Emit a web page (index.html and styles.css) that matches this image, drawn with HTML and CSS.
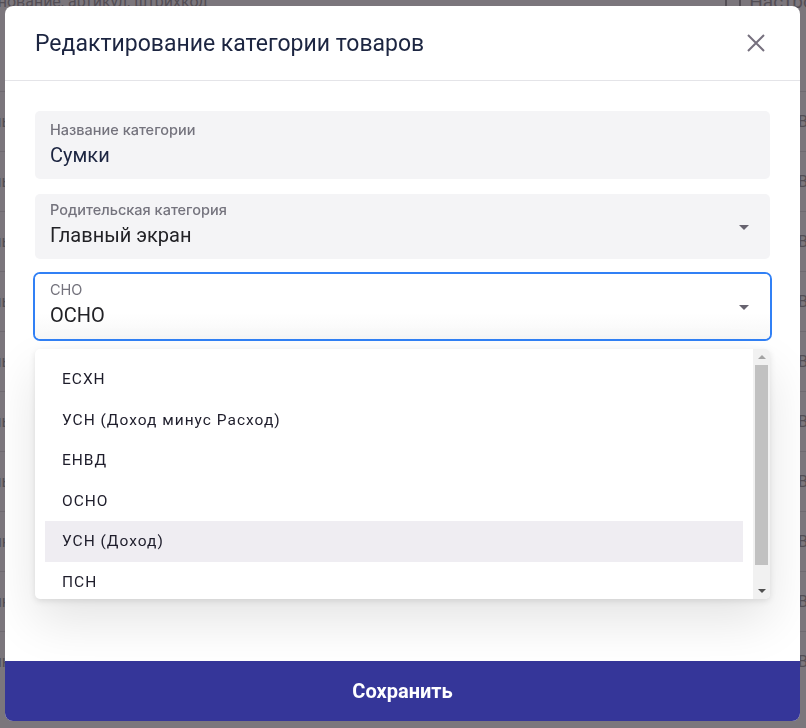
FILE: index.html
```html
<!DOCTYPE html>
<html lang="ru">
<head>
    <meta charset="UTF-8">
    <meta name="viewport" content="width=device-width, initial-scale=1.0">
    <title>Категории товаров</title>
    <link rel="stylesheet" href="styles.css">
</head>
<body>

    <!-- page behind the dialog -->
    <div class="page">
        <div class="toolbar">
            <span class="search">Наименование, артикул, штрихкод</span>
            <span class="tools"><span class="grid-icon"></span>Настройки</span>
        </div>
        <div class="table">
            <div class="row"><span>Цены</span><span>Вал</span></div>
            <div class="row"><span>Цены</span><span>Вал</span></div>
            <div class="row"><span>Цены</span><span>Вал</span></div>
            <div class="row"><span>Цены</span><span>Вал</span></div>
            <div class="row"><span>Цены</span><span>Вал</span></div>
            <div class="row"><span>Цены</span><span>Вал</span></div>
            <div class="row"><span>Цены</span><span>Вал</span></div>
            <div class="row"><span>Сумк</span><span>Вал</span></div>
            <div class="row"><span>Сумк</span><span>Вал</span></div>
            <div class="row"><span>Сумк</span><span>Вал</span></div>
        </div>
    </div>

    <div class="overlay">
        <div class="modal">
            <header class="modal-head">
                <h2>Редактирование категории товаров</h2>
                <button class="close" aria-label="Закрыть">
                    <svg width="18" height="18" viewBox="0 0 18 18">
                        <path d="M1 1 L17 17 M17 1 L1 17" stroke="currentColor" stroke-width="2" fill="none"/>
                    </svg>
                </button>
            </header>

            <div class="modal-body">
                <div class="field field-name">
                    <label>Название категории</label>
                    <div class="value">Сумки</div>
                </div>

                <div class="field field-select">
                    <label>Родительская категория</label>
                    <div class="value">Главный экран</div>
                    <span class="arrow"></span>
                </div>

                <div class="field field-select is-focused">
                    <label>СНО</label>
                    <div class="value">ОСНО</div>
                    <span class="arrow"></span>

                    <div class="menu">
                        <ul class="menu-list">
                            <li>ЕСХН</li>
                            <li>УСН (Доход минус Расход)</li>
                            <li>ЕНВД</li>
                            <li>ОСНО</li>
                            <li class="active">УСН (Доход)</li>
                            <li>ПСН</li>
                        </ul>
                        <div class="scrollbar">
                            <span class="sb-up"></span>
                            <span class="sb-thumb"></span>
                            <span class="sb-down"></span>
                        </div>
                    </div>
                </div>
            </div>

            <button class="save">Сохранить</button>
        </div>
    </div>

</body>
</html>
```

FILE: styles.css
```css
body {
    margin: 0;
    font-family: 'Roboto', 'Noto Sans', sans-serif;
    background: #7b767c;
    overflow: hidden;
}

/* ---------- page under the overlay ---------- */

.page {
    height: 100vh;
    overflow: hidden;
    color: #534e55;
}

.toolbar {
    display: flex;
    justify-content: space-between;
    align-items: center;
    height: 14px;
    margin-top: -6px;
    font-size: 16px;
}

.search {
    margin-left: -52px;
}

.tools {
    display: flex;
    align-items: center;
    gap: 8px;
    margin-right: -40px;
    font-size: 19px;
}

.grid-icon {
    width: 16px;
    height: 16px;
    border: 2px solid #534e55;
    box-sizing: border-box;
}

.table {
    margin-top: 83px;
}

.row {
    display: flex;
    justify-content: space-between;
    align-items: center;
    height: 59px;
    border-top: 1px solid #6f6a71;
    font-size: 16px;
}

.row span:first-child {
    margin-left: -28px;
}

.row span:last-child {
    margin-right: -20px;
}

/* ---------- dialog ---------- */

.overlay {
    position: fixed;
    inset: 0;
    display: flex;
    padding: 6px 6px 7px 5px;
}

.modal {
    flex: 1;
    display: flex;
    flex-direction: column;
    background: #fff;
    border-radius: 8px;
    overflow: hidden;
}

.modal-head {
    display: flex;
    align-items: center;
    justify-content: space-between;
    height: 74px;
    padding: 0 35px 0 30px;
    border-bottom: 1px solid #e4e4e8;
}

.modal-head h2 {
    margin: 0;
    font-size: 23px;
    font-weight: 400;
    color: #1c2541;
}

.close {
    display: flex;
    padding: 0;
    border: none;
    background: none;
    color: #76707e;
    cursor: pointer;
}

.modal-body {
    flex: 1;
    display: flex;
    flex-direction: column;
    gap: 15px;
    padding: 30px 30px 0;
}

.field {
    position: relative;
    display: flex;
    flex-direction: column;
    gap: 4px;
    height: 68px;
    padding: 10px 15px 0;
    box-sizing: border-box;
    background: #f4f4f6;
    border-radius: 5px;
}

.field-select {
    height: 65px;
    padding-top: 7px;
}

.field label {
    font-family: 'Inter', 'Roboto', sans-serif;
    font-size: 14.5px;
    line-height: 18px;
    font-weight: 500;
    color: #74737d;
}

.field .value {
    font-size: 20px;
    line-height: 24px;
    color: #1c2541;
}

.field-select .value {
    color: #222226;
}

.arrow {
    position: absolute;
    right: 21px;
    top: 50%;
    margin-top: -2px;
    border-left: 5px solid transparent;
    border-right: 5px solid transparent;
    border-top: 5px solid #67636f;
}

.is-focused {
    background: linear-gradient(#fff 60%, #f7f7f7);
    box-shadow: 0 0 0 2px #3180f5;
}

.is-focused label {
    font-weight: 400;
}

/* ---------- dropdown ---------- */

.menu {
    position: absolute;
    top: calc(100% + 10px);
    left: 0;
    right: 0;
    height: 250px;
    display: flex;
    background: #fff;
    border-radius: 5px;
    box-shadow: 0 2px 6px rgba(0, 0, 0, 0.1), 0 22px 50px rgba(0, 0, 0, 0.11);
    overflow: hidden;
    z-index: 2;
}

.menu-list {
    flex: 1;
    margin: 0;
    padding: 10px 10px 0;
    list-style: none;
}

.menu-list li {
    display: flex;
    align-items: center;
    height: 40.5px;
    padding-left: 17px;
    font-size: 15.5px;
    letter-spacing: 1px;
    color: #1e1d2b;
}

.menu-list li.active {
    background: #efedf2;
}

.scrollbar {
    width: 17px;
    display: flex;
    flex-direction: column;
    align-items: center;
    background: #f1f1f1;
}

.sb-up,
.sb-down {
    width: 0;
    height: 0;
    margin: 6px 0;
    border-left: 4px solid transparent;
    border-right: 4px solid transparent;
}

.sb-up {
    border-bottom: 4px solid #a3a3a3;
}

.sb-down {
    border-top: 4px solid #505050;
}

.sb-thumb {
    width: 13px;
    flex: 1;
    margin-bottom: 18px;
    background: #c1c1c1;
}

/* ---------- footer ---------- */

.save {
    height: 60px;
    border: none;
    background: #353699;
    color: #fff;
    font-family: inherit;
    font-size: 20px;
    font-weight: 700;
    cursor: pointer;
}
```
